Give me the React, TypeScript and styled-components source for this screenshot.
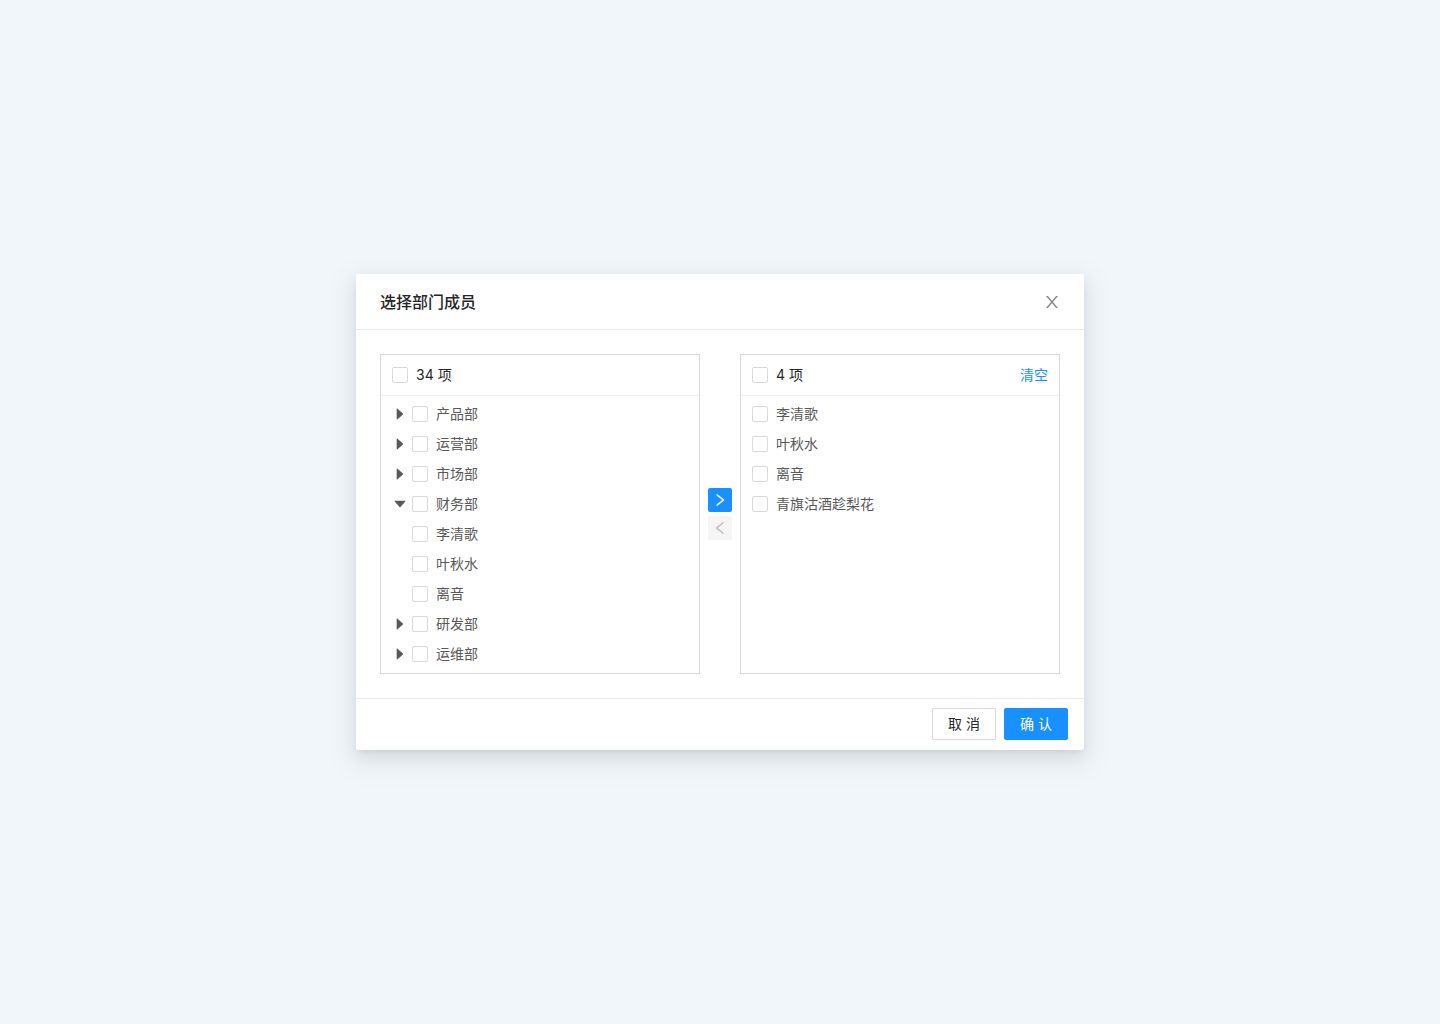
import React, { useState } from "react";
import styled, { createGlobalStyle } from "styled-components";

const fontStack = 'Inter, "Noto Sans CJK SC", sans-serif';

const GlobalStyle = createGlobalStyle`
  *, *::before, *::after { box-sizing: border-box; }
  body {
    margin: 0;
    background: #f1f6fa;
    color: #262626;
    font: 14px/22px ${fontStack};
  }
`;

const Page = styled.main`
  display: flex;
  align-items: center;
  justify-content: center;
  min-height: 100vh;
  padding: 24px;
`;

const Dialog = styled.section`
  width: 100%;
  max-width: 728px;
  background: #fff;
  border-radius: 2px;
  box-shadow: 0 3px 6px -4px rgba(0, 0, 0, 0.12), 0 6px 16px rgba(0, 0, 0, 0.08),
    0 9px 28px 8px rgba(0, 0, 0, 0.05);
`;

const DialogHeader = styled.header`
  display: flex;
  align-items: center;
  justify-content: space-between;
  padding: 16px 24px 15px;
  border-bottom: 1px solid #ebebeb;
`;

const Title = styled.h1`
  margin: 0;
  font-size: 16px;
  line-height: 24px;
  font-weight: 500;
`;

const CloseButton = styled.button`
  display: grid;
  place-items: center;
  width: 16px;
  height: 16px;
  padding: 0;
  border: 0;
  background: none;
  color: #8c8c8c;
  cursor: pointer;
`;

const DialogBody = styled.div`
  display: flex;
  align-items: stretch;
  gap: 8px;
  padding: 24px;
`;

const Panel = styled.section`
  flex: 1;
  min-width: 0;
  border: 1px solid #d9d9d9;
`;

const PanelHeader = styled.header`
  display: flex;
  align-items: center;
  justify-content: space-between;
  padding: 9px 11px;
  border-bottom: 1px solid #f0f0f0;
`;

const List = styled.ul<{ $inset: number }>`
  display: flex;
  flex-direction: column;
  gap: 6px;
  margin: 0;
  padding: 6px ${(p) => p.$inset}px 7px;
  list-style: none;
`;

const Row = styled.li<{ $child?: boolean }>`
  display: flex;
  align-items: center;
  height: 24px;
  padding-left: ${(p) => (p.$child ? 24 : 0)}px;
  color: #595959;
`;

const CaretButton = styled.button`
  display: grid;
  place-items: center;
  width: 24px;
  height: 24px;
  padding: 0;
  border: 0;
  background: none;
  color: #595959;
  cursor: pointer;
`;

const CheckLabel = styled.label`
  display: flex;
  align-items: center;
  gap: 8px;
  cursor: pointer;
`;

const Checkbox = styled.input`
  appearance: none;
  width: 16px;
  height: 16px;
  margin: 0;
  border: 1px solid #d9d9d9;
  border-radius: 2px;
  background: #fff;
  cursor: pointer;

  &:checked {
    border-color: #1890ff;
    background: #1890ff;
  }
`;

const TextButton = styled.button`
  padding: 0;
  border: 0;
  background: none;
  color: #1890ff;
  font: inherit;
  cursor: pointer;
`;

const Moves = styled.div`
  display: flex;
  flex-direction: column;
  justify-content: center;
  gap: 4px;
`;

const MoveButton = styled.button`
  display: grid;
  place-items: center;
  width: 24px;
  height: 24px;
  padding: 0;
  border: 0;
  border-radius: 2px;
  background: #1890ff;
  color: #fff;
  cursor: pointer;

  svg {
    stroke: currentColor;
    stroke-width: 20;
  }

  &:disabled {
    background: #f5f5f5;
    color: #bfbfbf;
    cursor: not-allowed;
  }
`;

const DialogFooter = styled.footer`
  display: flex;
  justify-content: flex-end;
  gap: 8px;
  padding: 9px 16px 10px;
  border-top: 1px solid #ebebeb;
`;

const Button = styled.button<{ $primary?: boolean }>`
  min-width: 64px;
  height: 32px;
  padding: 0 15px;
  border: 1px solid ${(p) => (p.$primary ? "#1890ff" : "#d9d9d9")};
  border-radius: 2px;
  background: ${(p) => (p.$primary ? "#1890ff" : "#fff")};
  color: ${(p) => (p.$primary ? "#fff" : "#262626")};
  font: inherit;
  white-space: nowrap;
  cursor: pointer;
`;

const paths = {
  close:
    "M563.8 512l262.5-312.9c4.4-5.2.7-13.1-6.1-13.1h-79.8c-4.7 0-9.2 2.1-12.3 5.7L511.6 449.8 295.1 191.7c-3-3.6-7.5-5.7-12.3-5.7H203c-6.8 0-10.5 7.9-6.1 13.1L459.4 512 196.9 824.9A7.95 7.95 0 0 0 203 838h79.8c4.7 0 9.2-2.1 12.3-5.7l216.5-258.1 216.5 258.1c3 3.6 7.5 5.7 12.3 5.7h79.8c6.8 0 10.5-7.9 6.1-13.1L563.8 512z",
  right:
    "M765.7 486.8L314.9 134.7A7.97 7.97 0 0 0 302 141v77.3c0 4.9 2.3 9.6 6.1 12.6l360 281.1-360 281.1c-3.9 3-6.1 7.7-6.1 12.6V883c0 6.7 7.7 10.4 12.9 6.3l450.8-352.1a31.96 31.96 0 0 0 0-50.4z",
  left: "M724 218.3V141c0-6.7-7.7-10.4-12.9-6.3L260.3 486.8a31.86 31.86 0 0 0 0 50.3l450.8 352.1c5.3 4.1 12.9.4 12.9-6.3v-77.3c0-4.9-2.3-9.6-6.1-12.6l-360-281 360-281.1c3.8-3 6.1-7.7 6.1-12.6z",
  caretRight:
    "M715.8 493.5L335 165.1c-14.2-12.2-35-1.2-35 18.5v656.8c0 19.7 20.8 30.7 35 18.5l380.8-328.4c10.9-9.4 10.9-27.6 0-37z",
  caretDown:
    "M840.4 300H183.6c-19.7 0-30.7 20.8-18.5 35l328.4 380.8c9.4 10.9 27.6 10.9 37 0L858.9 335c12.2-14.2 1.2-35-18.5-35z",
};

function Icon({ name, viewBox = "0 0 1024 1024" }: { name: keyof typeof paths; viewBox?: string }) {
  return (
    <svg width="16" height="16" viewBox={viewBox} fill="currentColor" aria-hidden="true">
      <path d={paths[name]} />
    </svg>
  );
}

function CheckItem({ children }: { children: React.ReactNode }) {
  return (
    <CheckLabel>
      <Checkbox type="checkbox" />
      <span>{children}</span>
    </CheckLabel>
  );
}

const departments = [
  { name: "产品部", members: [] },
  { name: "运营部", members: [] },
  { name: "市场部", members: [] },
  { name: "财务部", members: ["李清歌", "叶秋水", "离音"] },
  { name: "研发部", members: [] },
  { name: "运维部", members: [] },
];

export default function App() {
  const [open, setOpen] = useState("财务部");
  const [selected, setSelected] = useState(["李清歌", "叶秋水", "离音", "青旗沽酒趁梨花"]);

  return (
    <Page>
      <GlobalStyle />
      <Dialog role="dialog" aria-labelledby="dialog-title">
        <DialogHeader>
          <Title id="dialog-title">选择部门成员</Title>
          <CloseButton type="button" aria-label="关闭">
            <Icon name="close" viewBox="85 85 854 854" />
          </CloseButton>
        </DialogHeader>
        <DialogBody>
          <Panel>
            <PanelHeader>
              <CheckItem>34 项</CheckItem>
            </PanelHeader>
            <List $inset={7}>
              {departments.map(({ name, members }) => (
                <React.Fragment key={name}>
                  <Row>
                    <CaretButton
                      type="button"
                      aria-label={name}
                      aria-expanded={open === name}
                      onClick={() => setOpen(open === name ? "" : name)}
                    >
                      <Icon name={open === name ? "caretDown" : "caretRight"} />
                    </CaretButton>
                    <CheckItem>{name}</CheckItem>
                  </Row>
                  {open === name &&
                    members.map((member) => (
                      <Row key={member} $child>
                        <CheckItem>{member}</CheckItem>
                      </Row>
                    ))}
                </React.Fragment>
              ))}
            </List>
          </Panel>
          <Moves>
            <MoveButton type="button" aria-label="添加">
              <Icon name="right" />
            </MoveButton>
            <MoveButton type="button" aria-label="移除" disabled>
              <Icon name="left" />
            </MoveButton>
          </Moves>
          <Panel>
            <PanelHeader>
              <CheckItem>{`${selected.length} 项`}</CheckItem>
              <TextButton type="button" onClick={() => setSelected([])}>
                清空
              </TextButton>
            </PanelHeader>
            <List $inset={11}>
              {selected.map((member) => (
                <Row key={member}>
                  <CheckItem>{member}</CheckItem>
                </Row>
              ))}
            </List>
          </Panel>
        </DialogBody>
        <DialogFooter>
          <Button type="button">取 消</Button>
          <Button type="button" $primary>
            确 认
          </Button>
        </DialogFooter>
      </Dialog>
    </Page>
  );
}
